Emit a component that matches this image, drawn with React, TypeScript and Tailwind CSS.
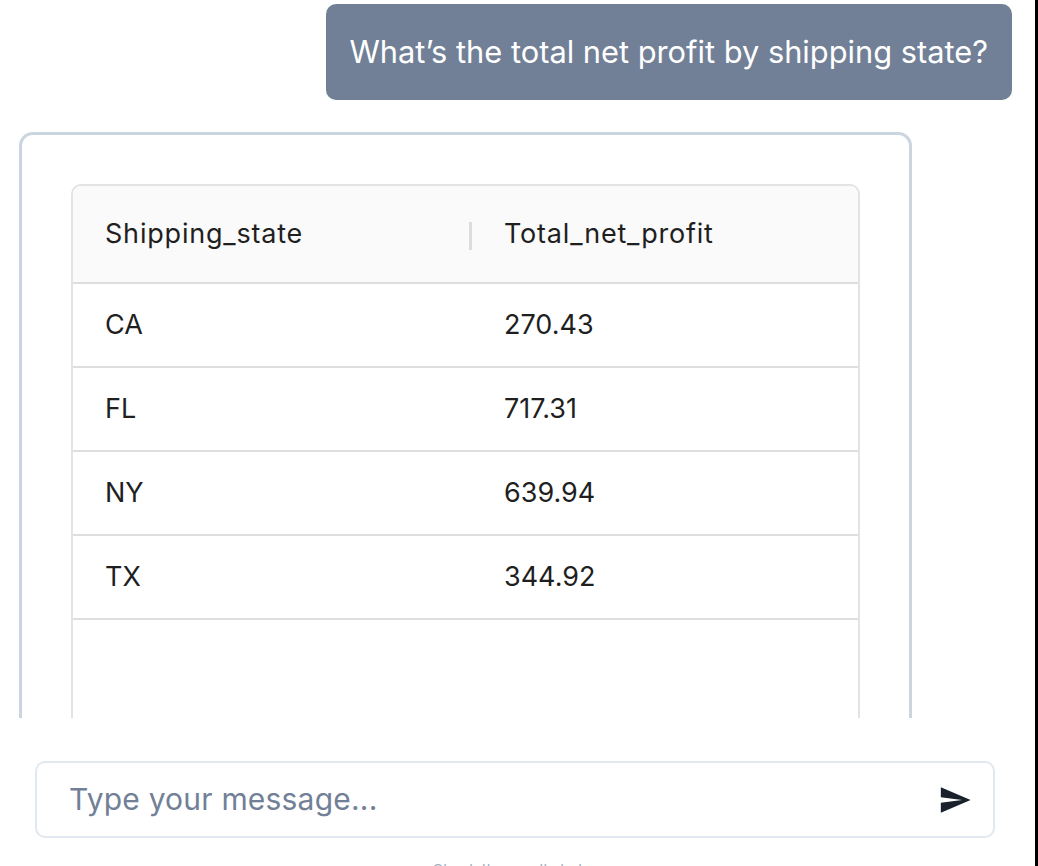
import { MdSend } from "react-icons/md";

const rows = [
  { state: "CA", profit: "270.43" },
  { state: "FL", profit: "717.31" },
  { state: "NY", profit: "639.94" },
  { state: "TX", profit: "344.92" },
];

function ResultTable() {
  return (
    <div className="h-[620px] rounded-[10px] border-2 border-[#e3e3e3] text-[27px] text-[#1f1f1f]">
      <div className="grid h-[96px] grid-cols-[399px_1fr] items-center rounded-t-[10px] bg-[#fafafa] tracking-[0.8px]">
        <div className="relative flex h-full items-center pl-[32px]">
          Shipping_state
          <span className="absolute right-0 top-[36px] h-[28px] w-[3px] bg-[#dcdcdc]" />
        </div>
        <div className="pl-[32px]">Total_net_profit</div>
      </div>
      {rows.map((row) => (
        <div key={row.state} className="grid h-[84px] grid-cols-[399px_1fr] items-center border-t-2 border-[#dedede]">
          <div className="pl-[32px]">{row.state}</div>
          <div className="pl-[32px]">{row.profit}</div>
        </div>
      ))}
      <div className="border-t-2 border-[#dedede]" />
    </div>
  );
}

export default function App() {
  return (
    <div className="flex h-[866px] w-[1038px] overflow-hidden bg-white font-['Inter',sans-serif]">
      <div className="flex min-w-0 flex-1 flex-col">
        <div className="h-[718px] shrink-0 overflow-hidden">
          <div className="flex justify-end pr-[23px] pt-[4px]">
            <div className="flex h-[96px] items-center rounded-[10px] bg-[#718096] px-[24px] text-[30.8px] text-white">
              What’s the total net profit by shipping state?
            </div>
          </div>
          <div className="ml-[19px] mt-[32px] w-[893px] rounded-t-[14px] border-[3px] border-b-0 border-[#cbd5e0] px-[49px] pt-[49px]">
            <ResultTable />
          </div>
        </div>
        <div className="ml-[35px] mt-[43px] flex h-[77px] w-[960px] shrink-0 items-center rounded-[10px] border-2 border-[#e2e8f0] pl-[32px] pr-[21px]">
          <input
            className="min-w-0 flex-1 bg-transparent text-[30px] tracking-[0.2px] text-[#1a202c] outline-none placeholder:text-[#718096]"
            placeholder="Type your message..."
          />
          <button className="flex items-center justify-center text-[#1a202c]">
            <MdSend size={34} />
          </button>
        </div>
        <p className="mt-[21px] text-center text-[15px] text-[#a0aec0]">Check the results below</p>
      </div>
      <div className="w-[3px] shrink-0 bg-black" />
    </div>
  );
}
